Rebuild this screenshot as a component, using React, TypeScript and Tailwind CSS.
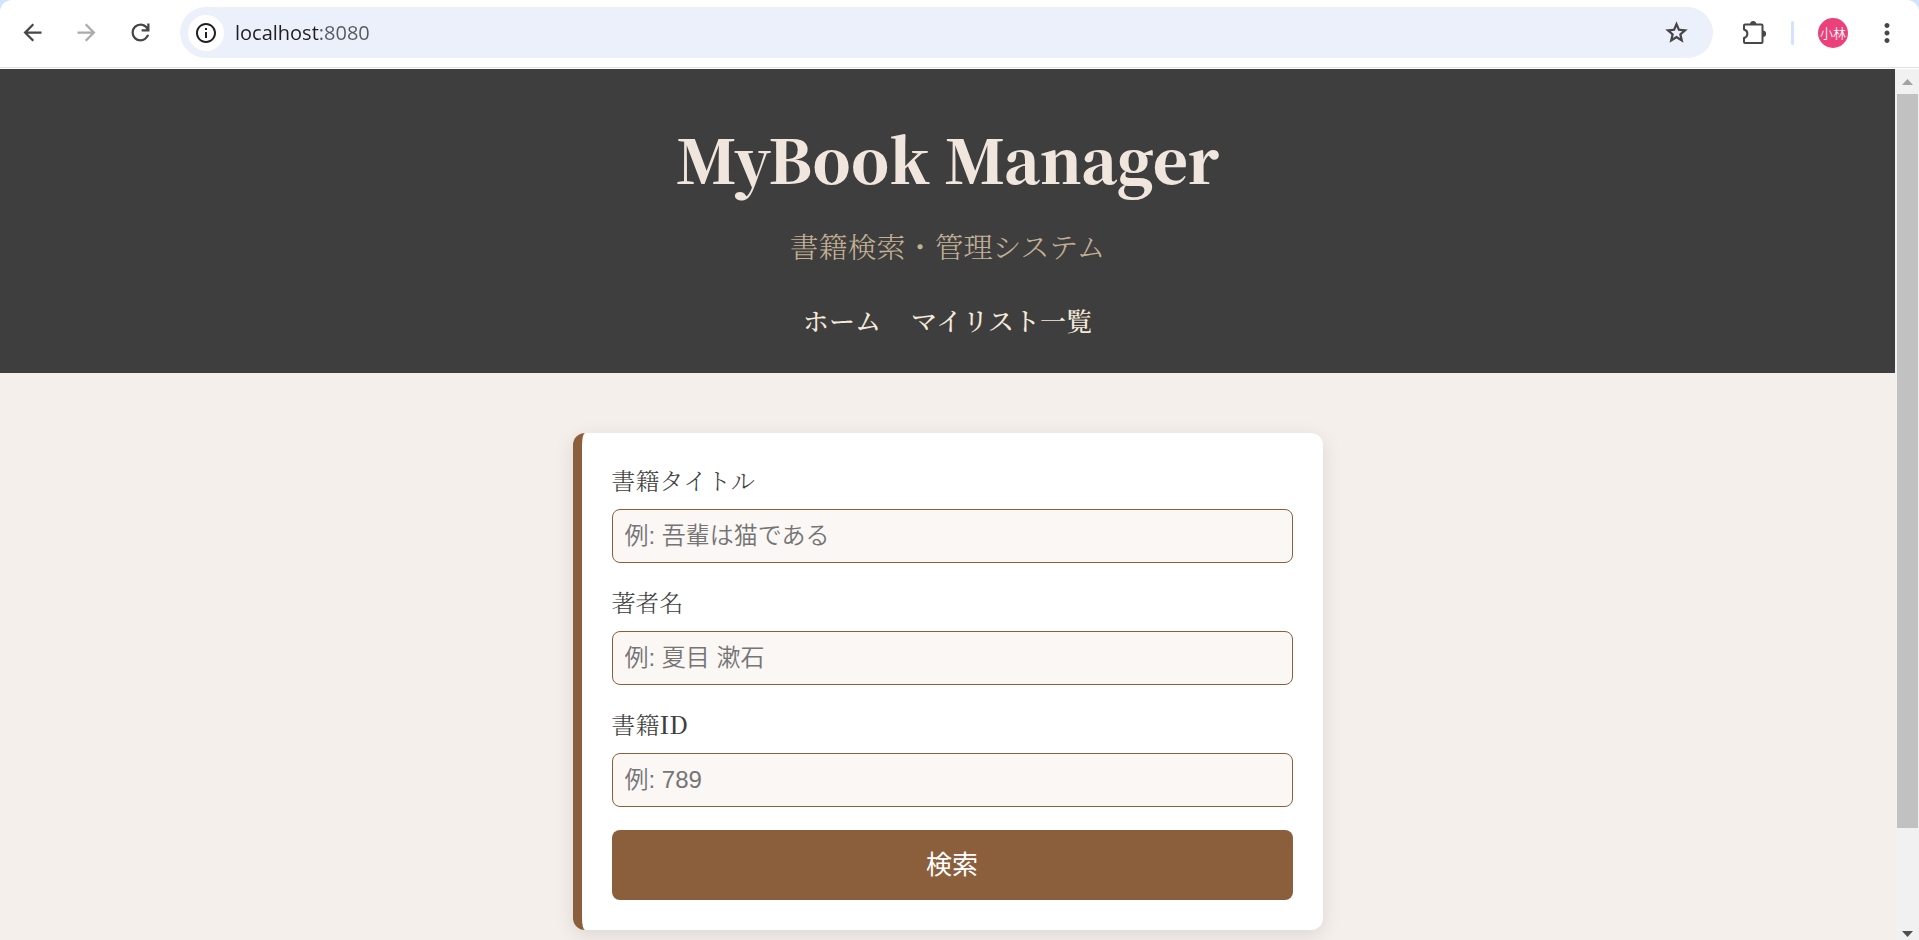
import type { ReactNode } from "react";
import { MdArrowBack, MdArrowForward, MdMoreVert, MdInfoOutline } from "react-icons/md";

const serif = "font-['Noto_Serif_JP','Noto_Serif_CJK_JP','Liberation_Serif','Noto_Sans_CJK_JP',serif]";

function ToolButton({
  label,
  color = "text-[#474747]",
  className = "",
  children,
}: {
  label: string;
  color?: string;
  className?: string;
  children: ReactNode;
}) {
  return (
    <button type="button" aria-label={label} className={`flex shrink-0 items-center justify-center ${color} ${className}`}>
      {children}
    </button>
  );
}

function ReloadIcon() {
  return (
    <svg width="27" height="27" viewBox="0 -960 960 960" fill="currentColor">
      <path d="M480-160q-134 0-227-93t-93-227q0-134 93-227t227-93q69 0 132 28.500T720-690v-110h80v280H520v-80h168q-32-56-87.500-88T480-720q-100 0-170 70t-70 170q0 100 70 170t170 70q77 0 139-44t87-116h84q-28 106-114 173t-196 67Z" />
    </svg>
  );
}

function StarIcon() {
  return (
    <svg width="27" height="27" viewBox="0 -960 960 960" fill="currentColor">
      <path d="m354-287 126-76 126 77-33-144 111-96-146-13-58-136-58 135-146 13 111 97-33 143ZM233-120l65-281L80-590l288-25 112-265 112 265 288 25-218 189 65 281-247-149-247 149Z" />
    </svg>
  );
}

function ExtensionIcon() {
  return (
    <svg width="26" height="26" viewBox="0 0 26 26" fill="none">
      <path
        d="M4 4.500H20.500a1 1 0 0 1 1 1V22a1 1 0 0 1-1 1H4a1 1 0 0 1-1-1V18c4.500-1.200 4.500-7.300 0-8.500V5.500a1 1 0 0 1 1-1z"
        stroke="currentColor"
        strokeWidth="2"
        strokeLinejoin="round"
      />
      <path d="M9 4.500a3.200 3.600 0 0 1 6.400 0zM21.500 10.500a3.600 3.200 0 0 1 0 6.400z" fill="currentColor" />
    </svg>
  );
}

function Toolbar() {
  return (
    <div className="border-b border-white bg-[#d3e3fd]">
      <div className="flex h-[68px] items-center rounded-t-xl border-b border-[#dfe1e0] bg-white pb-0.5 pl-[15px] pr-[17px]">
        <nav aria-label="ブラウザ" className="flex gap-5">
          <ToolButton label="戻る" className="size-[34px]"><MdArrowBack size={27} /></ToolButton>
          <ToolButton label="進む" color="text-[#ababab]" className="size-[34px]"><MdArrowForward size={27} /></ToolButton>
          <ToolButton label="再読み込み" className="size-[34px]"><ReloadIcon /></ToolButton>
        </nav>
        <div className="ml-[23px] flex h-[51px] flex-1 items-center rounded-full bg-[#ecf0fa] pl-2 pr-[23px]">
          <ToolButton label="サイト情報" color="text-[#1f1f1f]" className="size-9 rounded-full bg-white"><MdInfoOutline size={24} /></ToolButton>
          <input
            aria-label="アドレス"
            defaultValue="localhost:8080"
            className="ml-[11px] min-w-0 flex-1 bg-[linear-gradient(90deg,#1f1f1f_84px,#55585c_84px)] bg-clip-text font-['Open_Sans',sans-serif] text-xl text-transparent outline-none"
          />
          <ToolButton label="ブックマーク"><StarIcon /></ToolButton>
        </div>
        <div className="ml-7 flex items-center">
          <ToolButton label="拡張機能"><ExtensionIcon /></ToolButton>
          <span className="ml-6 h-6 w-[3px] rounded bg-[#d3e3fd]" />
          <button type="button" className="ml-6 size-[30px] rounded-full bg-[#ec407a] font-['Noto_Sans_CJK_JP',sans-serif] text-[13px] font-[350] text-white">小林</button>
          <ToolButton label="メニュー" className="ml-6"><MdMoreVert size={30} /></ToolButton>
        </div>
      </div>
    </div>
  );
}

function Field({ id, label, placeholder }: { id: string; label: ReactNode; placeholder: string }) {
  return (
    <div className="mb-[22px]">
      <label htmlFor={id} className="mb-3 block text-2xl leading-[34px] font-[350] text-[#3e3e3e]">{label}</label>
      <input
        id={id}
        placeholder={placeholder}
        className="block h-[54px] w-full rounded-lg border border-[#8b5e3c] bg-[#faf7f4] px-3 font-['Liberation_Sans','Noto_Sans_CJK_JP',sans-serif] text-2xl font-[350] text-[#3e3e3e] placeholder:text-[#757575]"
      />
    </div>
  );
}

function ScrollBar() {
  return (
    <div aria-hidden="true" className="flex w-6 shrink-0 flex-col items-center justify-between bg-[#f1f1f1]">
      <svg width="24" height="25" viewBox="0 0 24 25"><path d="M7 16h11l-5.500-6z" fill="#a3a3a3" /></svg>
      <div className="flex w-[21px] flex-1 flex-col">
        <div className="basis-[89%] bg-[#c1c1c1]" />
      </div>
      <svg width="24" height="21" viewBox="0 0 24 21"><path d="M7 12h11l-5.500 6z" fill="#505050" /></svg>
    </div>
  );
}

export default function App() {
  return (
    <div className="flex h-screen flex-col overflow-hidden">
      <Toolbar />
      <div className="flex min-h-0 flex-1">
        <div className={`flex-1 overflow-hidden bg-[#f4efeb] ${serif}`}>
          <header className="bg-[#3e3e3e] pb-[33px] pt-[47px] text-center">
            <h1 className="text-[60px] font-black leading-[84px] text-[#f0e6dd]">MyBook Manager</h1>
            <p className="mt-6 text-[29px] font-[350] leading-[44px] text-[#c2b095]">書籍検索・管理システム</p>
            <nav aria-label="メイン" className="mt-8 flex justify-center gap-[30px] text-[26px] font-medium leading-10 text-[#f5e9da]">
              <a href="#home">ホーム</a>
              <a href="#list">マイリスト一覧</a>
            </nav>
          </header>
          <main className="px-5 pt-[60px]">
            <form className="mx-auto max-w-[750px] rounded-[12px] border-l-[9px] border-[#8b5e3c] bg-white p-[30px] shadow-[0_5px_20px_rgba(0,0,0,0.1)]">
              <Field id="title" label="書籍タイトル" placeholder="例: 吾輩は猫である" />
              <Field id="author" label="著者名" placeholder="例: 夏目 漱石" />
              <Field id="book-id" label={<>書籍<span className="font-medium">ID</span></>} placeholder="例: 789" />
              <button type="submit" className="mt-[23px] block h-[70px] w-full rounded-lg bg-[#8b5e3c] pb-1.5 font-['Noto_Sans_CJK_JP',sans-serif] text-[26px] text-white">検索</button>
            </form>
          </main>
        </div>
        <ScrollBar />
      </div>
    </div>
  );
}
